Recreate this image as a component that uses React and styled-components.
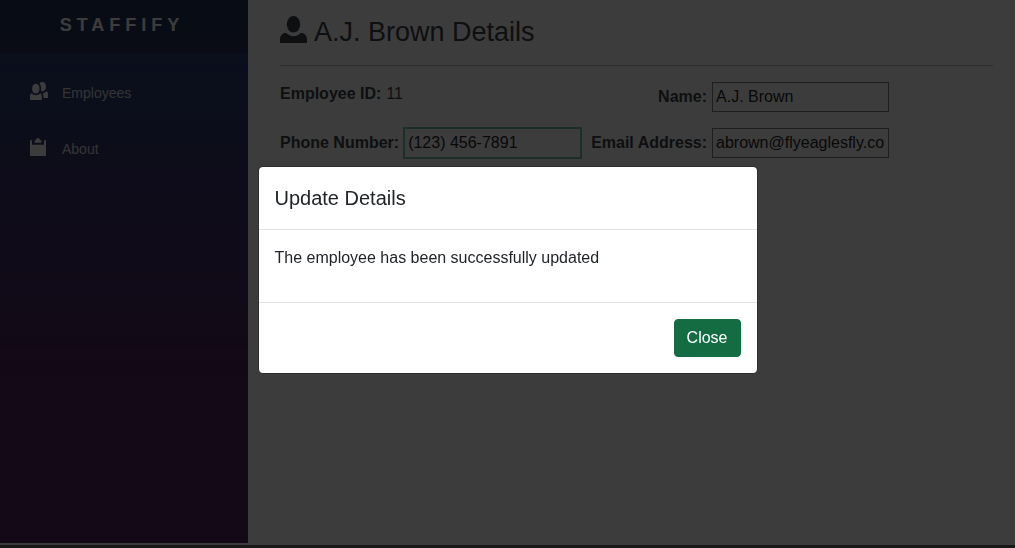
import React from 'react';
import styled, { createGlobalStyle } from 'styled-components';

const GlobalStyle = createGlobalStyle`
  *, *::before, *::after { box-sizing: border-box; }
  body {
    margin: 0;
    background: #fff;
    color: #212529;
    font: 400 16px/24px "Liberation Sans", Arial, sans-serif;
  }
`;

const Page = styled.div`
  display: flex;
  flex-direction: column;
  min-height: 100vh;
`;

const Layout = styled.div`
  display: flex;
  flex: 1;
`;

const Sidebar = styled.aside`
  flex: 0 0 248px;
  margin-bottom: 2px;
  background: linear-gradient(180deg, rgb(5, 39, 103) 0%, #3a0647 70%);
`;

const Brand = styled.a`
  display: flex;
  align-items: center;
  justify-content: center;
  height: 53px;
  padding: 0 4px 4px 0;
  background: rgba(0, 0, 0, 0.4);
  color: #fff;
  font-size: 18px;
  font-weight: 700;
  letter-spacing: 5px;
  text-decoration: none;
`;

const Nav = styled.nav`
  display: flex;
  flex-direction: column;
  gap: 8px;
  padding: 16px;
`;

const NavItem = styled.a`
  display: flex;
  align-items: center;
  gap: 14px;
  height: 48px;
  padding: 0 14px;
  color: #d7d7d7;
  font-size: 14px;
  text-decoration: none;
`;

const NavIcon = styled.svg`
  width: 18px;
  height: 18px;
  margin-bottom: 4px;
  fill: #fff;
`;

const Main = styled.main`
  flex: 1;
  min-width: 0;
  padding: 16px 22px 16px 32px;
`;

const Title = styled.h1`
  display: flex;
  gap: 7px;
  margin: 0 0 16px;
  font-size: 27px;
  line-height: 33px;
  font-weight: 400;
`;

const TitleIcon = styled.svg`
  width: 27px;
  height: 27px;
  fill: #212529;
`;

const Rule = styled.hr`
  margin: 0 0 16px;
  border: 0;
  border-top: 1px solid #b0b4b4;
`;

const Form = styled.form`
  display: grid;
  grid-template-columns: max-content max-content;
  gap: 16px 10px;
`;

const Field = styled.div`
  display: flex;
  align-items: ${(p) => (p.$top ? 'flex-start' : 'center')};
  justify-content: ${(p) => (p.$end ? 'flex-end' : 'flex-start')};
  gap: 5px;
`;

const Label = styled.label`
  font-weight: 700;
`;

const TextInput = styled.input`
  width: 177px;
  height: 30px;
  padding: 0 3px;
  border: 1px solid ${(p) => (p.$active ? '#64be96' : '#6c6c6c')};
  border-radius: 0;
  outline: ${(p) => (p.$active ? '1px solid #64be96' : 'none')};
  background: #fff;
  color: #000;
  font: inherit;
`;

const BottomEdge = styled.div`
  position: relative;
  z-index: 3;
  height: 3px;
  background: #1a191a;
`;

const Backdrop = styled.div`
  position: fixed;
  inset: 0;
  z-index: 1;
  background: rgba(10, 10, 10, 0.796);
`;

const ModalLayer = styled.div`
  position: fixed;
  inset: 0 0 8px;
  z-index: 2;
  display: flex;
  align-items: center;
  justify-content: center;
`;

const Dialog = styled.section`
  width: 500px;
  max-width: 100%;
  border: 1px solid rgba(0, 0, 0, 0.2);
  border-radius: 5px;
  background: #fff;
  background-clip: padding-box;
`;

const DialogHeader = styled.header`
  padding: 16px;
  border-bottom: 1px solid #dee2e6;
`;

const DialogTitle = styled.h2`
  margin: 0;
  font-size: 20px;
  line-height: 30px;
  font-weight: 400;
`;

const DialogBody = styled.div`
  padding: 16px;

  p { margin: 0 0 16px; }
`;

const DialogFooter = styled.footer`
  display: flex;
  justify-content: flex-end;
  padding: 16px;
  border-top: 1px solid #dee2e6;
`;

const CloseButton = styled.button`
  height: 38px;
  padding: 0 12px;
  border: 1px solid #146c43;
  border-radius: 4px;
  background: #146c43;
  color: #fff;
  font: inherit;
  cursor: pointer;
`;

const PeopleIcon = () => (
  <NavIcon viewBox="0 0 18 18" aria-hidden="true">
    <ellipse cx="5.8" cy="6.7" rx="3.7" ry="4.9" />
    <path d="M1.6 11.3C.6 11.8 0 12.8 0 14v4h11.8v-4c0-1.2-.6-2.2-1.6-2.7-1.1 1.2-2.6 1.9-4.3 1.9s-3.2-.7-4.3-1.9z" />
    <path d="M12.4 0c-1.2 0-2.2.5-2.9 1.3 1 1.4 1.7 3.2 1.7 5.2 0 .9-.1 1.6-.3 2.3.5.4 1 .6 1.5.6 2 0 3.6-2.1 3.6-4.7S14.4 0 12.4 0z" />
    <path d="M16.4 9.3c-1 1.2-2.3 1.8-3.8 1.9.6.9.9 1.9.9 3V16H18v-4c0-1.2-.6-2.2-1.6-2.7z" />
  </NavIcon>
);

const ClipboardIcon = () => (
  <NavIcon viewBox="0 0 18 18" aria-hidden="true">
    <path d="M.5 2.2c-.3 0-.5.3-.5.6v14.7c0 .3.2.5.5.5h15c.3 0 .5-.2.5-.5V2.8c0-.3-.2-.6-.5-.6H14v4.5H2V2.2z" />
    <path d="M8 0C7 0 6.4.7 6.4 1.6L4.6 2.8v1.9h6.8V2.8L9.6 1.6C9.6.7 9 0 8 0z" />
  </NavIcon>
);

const PersonIcon = () => (
  <TitleIcon viewBox="0 0 27 27" aria-hidden="true">
    <ellipse cx="13.5" cy="8.3" rx="6.7" ry="8.3" />
    <path d="M6.2 16.8C2.6 17 0 19.8 0 23.2V27h27v-3.8c0-3.4-2.6-6.2-6.2-6.4-1.9 2.1-4.4 3.4-7.3 3.4s-5.4-1.3-7.3-3.4z" />
  </TitleIcon>
);

export default function App() {
  return (
    <>
      <GlobalStyle />
      <Page>
        <Layout>
          <Sidebar>
            <Brand href="#home">STAFFIFY</Brand>
            <Nav>
              <NavItem href="#employees">
                <PeopleIcon />
                Employees
              </NavItem>
              <NavItem href="#about">
                <ClipboardIcon />
                About
              </NavItem>
            </Nav>
          </Sidebar>
          <Main>
            <Title>
              <PersonIcon />
              A.J. Brown Details
            </Title>
            <Rule />
            <Form>
              <Field $top>
                <Label as="strong">Employee ID:</Label>
                <span>11</span>
              </Field>
              <Field $end>
                <Label htmlFor="name">Name:</Label>
                <TextInput id="name" defaultValue="A.J. Brown" />
              </Field>
              <Field>
                <Label htmlFor="phone">Phone Number:</Label>
                <TextInput id="phone" type="tel" $active defaultValue="(123) 456-7891" />
              </Field>
              <Field $end>
                <Label htmlFor="email">Email Address:</Label>
                <TextInput id="email" type="email" defaultValue="abrown@flyeaglesfly.com" />
              </Field>
            </Form>
          </Main>
        </Layout>
        <BottomEdge />
      </Page>
      <Backdrop />
      <ModalLayer>
        <Dialog role="dialog" aria-modal="true" aria-labelledby="dialog-title">
          <DialogHeader>
            <DialogTitle id="dialog-title">Update Details</DialogTitle>
          </DialogHeader>
          <DialogBody>
            <p>The employee has been successfully updated</p>
          </DialogBody>
          <DialogFooter>
            <CloseButton type="button">Close</CloseButton>
          </DialogFooter>
        </Dialog>
      </ModalLayer>
    </>
  );
}
